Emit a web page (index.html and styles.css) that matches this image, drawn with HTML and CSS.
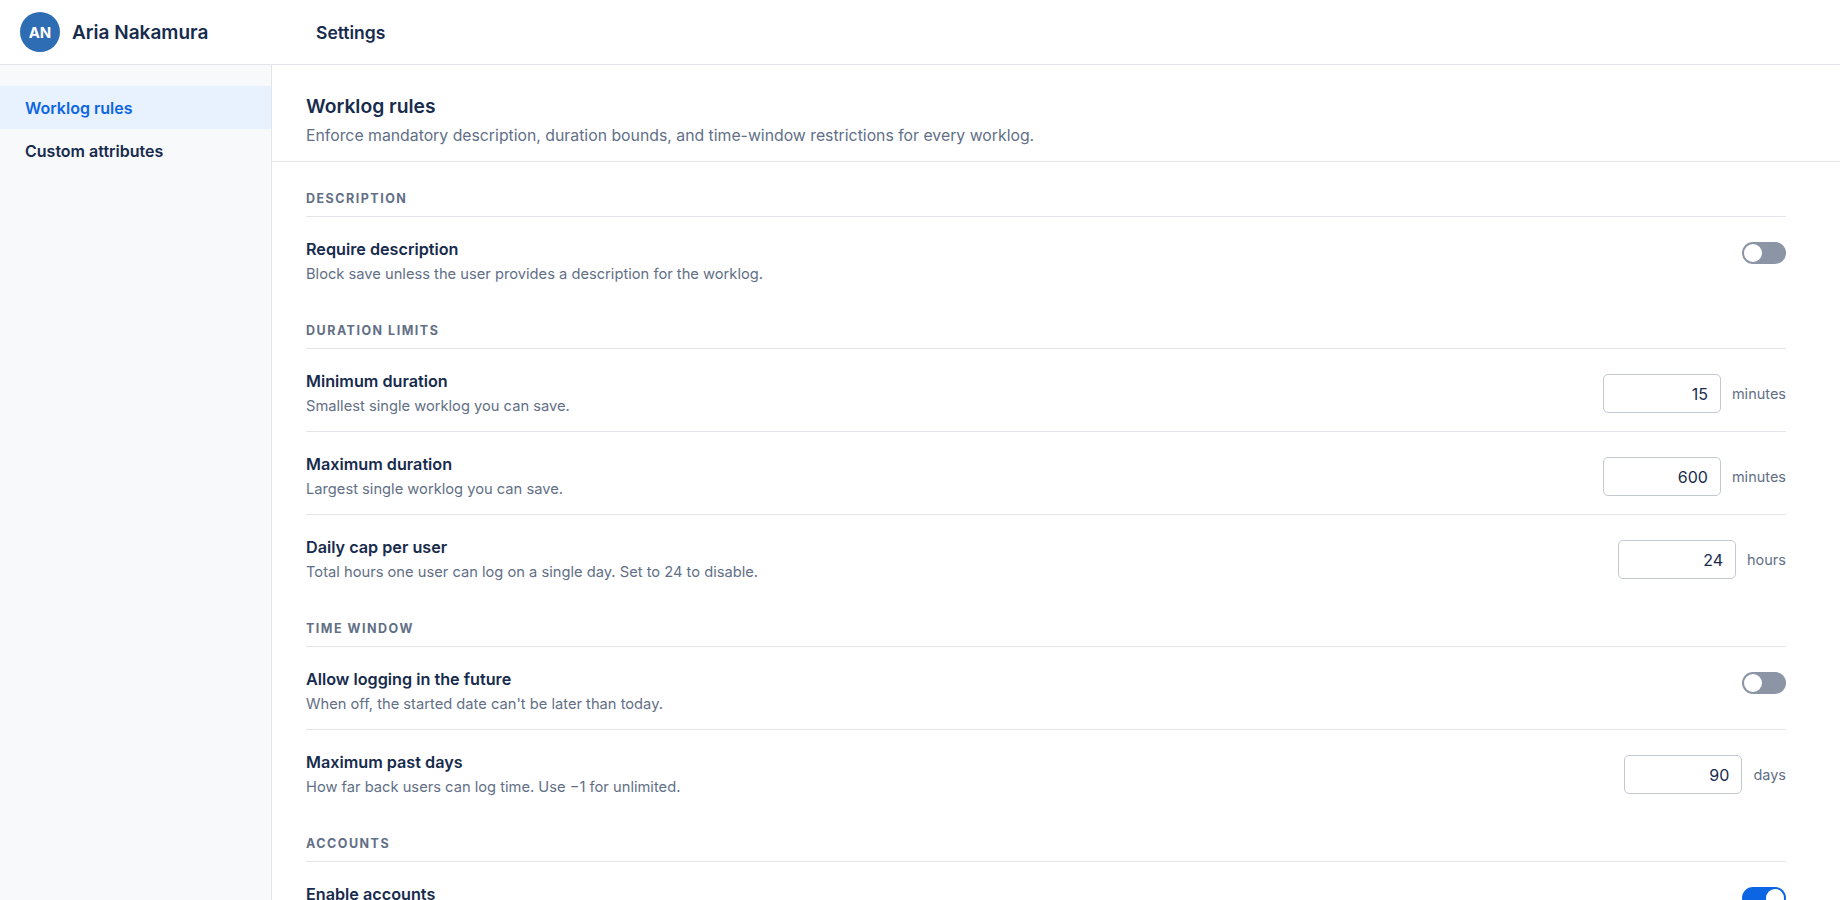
FILE: index.html
```html
<!DOCTYPE html>
<html lang="en">
<head>
	<title>Settings – Worklog rules</title>
	<meta charset="UTF-8">
	<meta name="viewport" content="width=device-width, initial-scale=1.0">
	<link rel="stylesheet" href="styles.css">
</head>
<body>
	<header class="topbar">
		<div class="brand">
			<span class="avatar">AN</span>
			<span class="brand-name">Aria Nakamura</span>
		</div>
		<div class="topbar-title">Settings</div>
	</header>
	<div class="layout">
		<nav class="sidebar">
			<a class="nav-item active" href="#">Worklog rules</a>
			<a class="nav-item" href="#">Custom attributes</a>
		</nav>
		<main class="content">
			<div class="page-head">
				<h1>Worklog rules</h1>
				<p>Enforce mandatory description, duration bounds, and time-window restrictions for every worklog.</p>
			</div>
			<div class="page-body">
				<section class="group">
					<h2 class="group-title">Description</h2>
					<div class="row">
						<div class="row-text">
							<div class="row-label">Require description</div>
							<div class="row-help">Block save unless the user provides a description for the worklog.</div>
						</div>
						<span class="toggle"></span>
					</div>
				</section>
				<section class="group">
					<h2 class="group-title">Duration limits</h2>
					<div class="row">
						<div class="row-text">
							<div class="row-label">Minimum duration</div>
							<div class="row-help">Smallest single worklog you can save.</div>
						</div>
						<div class="field"><input class="num" type="text" value="15"><span class="unit">minutes</span></div>
					</div>
					<div class="row">
						<div class="row-text">
							<div class="row-label">Maximum duration</div>
							<div class="row-help">Largest single worklog you can save.</div>
						</div>
						<div class="field"><input class="num" type="text" value="600"><span class="unit">minutes</span></div>
					</div>
					<div class="row">
						<div class="row-text">
							<div class="row-label">Daily cap per user</div>
							<div class="row-help">Total hours one user can log on a single day. Set to 24 to disable.</div>
						</div>
						<div class="field"><input class="num" type="text" value="24"><span class="unit">hours</span></div>
					</div>
				</section>
				<section class="group">
					<h2 class="group-title">Time window</h2>
					<div class="row">
						<div class="row-text">
							<div class="row-label">Allow logging in the future</div>
							<div class="row-help">When off, the started date can't be later than today.</div>
						</div>
						<span class="toggle"></span>
					</div>
					<div class="row">
						<div class="row-text">
							<div class="row-label">Maximum past days</div>
							<div class="row-help">How far back users can log time. Use −1 for unlimited.</div>
						</div>
						<div class="field"><input class="num" type="text" value="90"><span class="unit">days</span></div>
					</div>
				</section>
				<section class="group">
					<h2 class="group-title">Accounts</h2>
					<div class="row">
						<div class="row-text">
							<div class="row-label">Enable accounts</div>
							<div class="row-help">Let users pick an account when they log work.</div>
						</div>
						<span class="toggle on"></span>
					</div>
				</section>
			</div>
		</main>
	</div>
</body>
</html>
```

FILE: styles.css
```css
* {box-sizing: border-box;}
html, body {height: 100%;}
body {
	margin: 0;
	overflow: hidden;
	background: #fff;
	color: #172b4d;
	font-family: Inter, "Noto Sans", sans-serif;
}
a {text-decoration: none;}

.topbar {
	display: flex;
	align-items: center;
	height: 65px;
	padding-left: 20px;
	border-bottom: 1px solid #e2e5ea;
}
.brand {
	display: flex;
	align-items: center;
	gap: 12px;
	width: 296px;
}
.avatar {
	display: flex;
	align-items: center;
	justify-content: center;
	width: 40px;
	height: 40px;
	border-radius: 50%;
	background: #2e6db4;
	color: #fff;
	font-size: 15px;
	font-weight: 700;
}
.brand-name {font-size: 19px; font-weight: 600;}
.topbar-title {font-size: 17.5px; font-weight: 600;}

.layout {
	display: flex;
	height: calc(100% - 65px);
}
.sidebar {
	display: flex;
	flex-direction: column;
	width: 272px;
	flex-shrink: 0;
	padding-top: 21px;
	background: #f8f9fb;
	border-right: 1px solid #e2e5ea;
}
.nav-item {
	display: flex;
	align-items: center;
	height: 43px;
	padding-left: 25px;
	color: #172b4d;
	font-size: 16px;
	font-weight: 600;
}
.nav-item.active {
	background: #e8f2fe;
	color: #0c66e4;
}

.content {
	flex: 1;
	overflow: hidden;
}
.page-head {
	padding: 27px 34px 14px;
	border-bottom: 1px solid #e2e5ea;
}
.page-head h1 {
	margin: 0 0 5px;
	font-size: 19.3px;
	line-height: 28px;
	font-weight: 600;
}
.page-head p {
	margin: 0;
	color: #626f86;
	font-size: 15.8px;
	line-height: 22px;
}
.page-body {padding: 5px 54px 0 34px;}
.group {padding-top: 24px;}
.group-title {
	margin: 0;
	padding-bottom: 9px;
	border-bottom: 1px solid #e2e5ea;
	color: #626f86;
	font-size: 12.5px;
	line-height: 16px;
	font-weight: 700;
	letter-spacing: 0.12em;
	text-transform: uppercase;
}
.row {
	display: flex;
	align-items: center;
	justify-content: space-between;
	gap: 24px;
	padding: 22px 0 15px;
}
.row + .row {border-top: 1px solid #e2e5ea;}
.row-label {
	font-size: 16.2px;
	line-height: 20px;
	font-weight: 600;
	margin-bottom: 5px;
}
.row-help {
	color: #626f86;
	font-size: 14.7px;
	line-height: 20px;
}

.field {
	display: flex;
	align-items: center;
	gap: 11px;
}
.num {
	width: 118px;
	height: 39px;
	padding: 0 12px;
	border: 1px solid #c3c8d1;
	border-radius: 5px;
	color: #172b4d;
	font-family: inherit;
	font-size: 16px;
	text-align: right;
}
.unit {
	color: #626f86;
	font-size: 14.5px;
}

.toggle {
	position: relative;
	width: 44px;
	height: 22px;
	flex-shrink: 0;
	margin-top: -17px;
	border-radius: 11px;
	background: #8c95a5;
}
.toggle::after {
	content: "";
	position: absolute;
	top: 2px;
	left: 2px;
	width: 18px;
	height: 18px;
	border-radius: 50%;
	background: #fff;
}
.toggle.on {background: #0c66e4;}
.toggle.on::after {left: 24px;}
```
